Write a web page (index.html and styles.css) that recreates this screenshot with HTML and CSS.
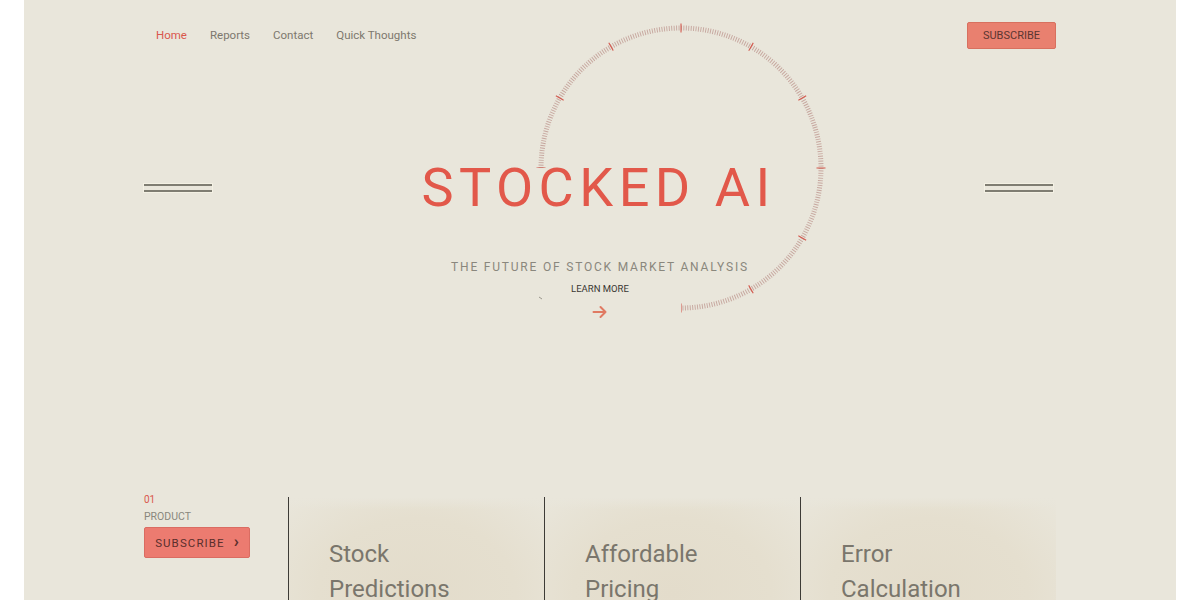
FILE: index.html
```html
<!DOCTYPE html>
<html lang="en">
<head>
<meta charset="utf-8">
<title>Stocked AI</title>
<link rel="stylesheet" href="styles.css">
</head>
<body>
<div class="page">
  <svg class="gauge" width="300" height="300" viewBox="0 0 300 300" aria-hidden="true">
    <path class="gauge-minor" d="M 10 150 A 140 140 0 1 1 150 290" pathLength="270"/>
    <path class="gauge-major" d="M 10 150 A 140 140 0 1 1 150 290" pathLength="270"/>
    <line class="gauge-dot" x1="8" y1="279" x2="11" y2="281"/>
  </svg>
  <div class="container">
    <header class="header">
      <nav class="nav">
        <a class="nav-link active" href="#">Home</a>
        <a class="nav-link" href="#">Reports</a>
        <a class="nav-link" href="#">Contact</a>
        <a class="nav-link" href="#">Quick Thoughts</a>
      </nav>
      <a class="btn-top" href="#">SUBSCRIBE</a>
    </header>

    <section class="hero">
      <div class="title-row">
        <span class="dbl-line"></span>
        <h1 class="title">STOCKED AI</h1>
        <span class="dbl-line"></span>
      </div>
      <p class="subtitle">THE FUTURE OF STOCK MARKET ANALYSIS</p>
      <a class="learn" href="#">LEARN MORE</a>
      <svg class="arrow" width="16" height="14" viewBox="0 0 16 14" aria-hidden="true">
        <path d="M1.5 7 H13.5 M8.5 2 L13.5 7 L8.5 12" fill="none" stroke="#e07a62" stroke-width="2" stroke-linecap="round" stroke-linejoin="round"/>
      </svg>
    </section>

    <section class="products">
      <div class="prod-intro">
        <div class="prod-num">01</div>
        <div class="prod-label">PRODUCT</div>
        <a class="btn-sub" href="#">SUBSCRIBE <span class="chev">&#8250;</span></a>
      </div>
      <div class="card"><h2 class="card-title">Stock<br>Predictions</h2></div>
      <div class="card"><h2 class="card-title">Affordable<br>Pricing</h2></div>
      <div class="card"><h2 class="card-title">Error<br>Calculation</h2></div>
    </section>
  </div>
</div>
</body>
</html>
```

FILE: styles.css
```css
* { box-sizing: border-box; }
html, body { margin: 0; padding: 0; background: #ffffff; }
body { font-family: Roboto, "Liberation Sans", sans-serif; }

.page {
  position: relative;
  margin: 0 24px;
  width: 1152px;
  height: 600px;
  overflow: hidden;
  background: #e9e6db;
}

.gauge {
  position: absolute;
  left: 507px;
  top: 18px;
  overflow: visible;
}
.gauge-minor {
  fill: none;
  stroke: #c6a69e;
  stroke-width: 5;
  stroke-dasharray: 0.38 0.62;
}
.gauge-major {
  fill: none;
  stroke: #d45a4f;
  stroke-width: 9;
  stroke-dasharray: 0.45 29.55;
  stroke-dashoffset: 0.22;
}
.gauge-dot { stroke: #9a968c; stroke-width: 1; }

.container {
  position: relative;
  width: 912px;
  margin: 0 auto;
}

.header {
  height: 70px;
  display: flex;
  align-items: center;
  justify-content: space-between;
}
.nav {
  display: flex;
  gap: 23px;
  padding-left: 12px;
}
.nav-link {
  font-size: 11.5px;
  color: #7d786e;
  text-decoration: none;
}
.nav-link.active { color: #d9574d; }

.btn-top {
  width: 89px;
  height: 27px;
  display: flex;
  align-items: center;
  justify-content: center;
  background: #e9806f;
  border: 1px solid #d8705f;
  border-radius: 2px;
  color: #5b3631;
  font-size: 11px;
  text-decoration: none;
}

.hero {
  display: flex;
  flex-direction: column;
  align-items: center;
  padding-top: 88px;
}
.title-row {
  align-self: stretch;
  display: flex;
  align-items: center;
  justify-content: space-between;
  height: 60px;
  padding-right: 3px;
}
.dbl-line {
  width: 68px;
  height: 8px;
  border-top: 2px solid #7f7d72;
  border-bottom: 2px solid #7f7d72;
  box-shadow: 0 0 0 1px #f4f1e4;
}
.title {
  margin: 0;
  font-size: 54px;
  line-height: 60px;
  font-weight: 400;
  color: #e2584a;
  letter-spacing: 5.5px;
}
.subtitle {
  margin: 41px 0 0 0;
  font-size: 12px;
  line-height: 16px;
  letter-spacing: 1.8px;
  color: #8a877d;
}
.learn {
  margin-top: 7px;
  font-size: 9.5px;
  line-height: 14px;
  color: #3a3733;
  text-decoration: none;
}
.arrow { margin-top: 9px; display: block; }

.products {
  margin-top: 174px;
  display: grid;
  grid-template-columns: 144px 256px 256px 256px;
}
.prod-intro {
  display: flex;
  flex-direction: column;
  align-items: flex-start;
}
.prod-num {
  font-size: 10px;
  line-height: 14px;
  color: #d9574d;
}
.prod-label {
  margin-top: 3px;
  font-size: 10.5px;
  line-height: 14px;
  color: #8a877d;
}
.btn-sub {
  margin-top: 3px;
  width: 106px;
  height: 31px;
  display: flex;
  align-items: center;
  justify-content: center;
  gap: 9px;
  background: #ec7b70;
  border: 1px solid #da6c62;
  border-radius: 2px;
  color: #5a2f2c;
  font-size: 11.5px;
  letter-spacing: 1.1px;
  text-decoration: none;
}
.chev { font-weight: 700; font-size: 17px; letter-spacing: 0; line-height: 1; margin-top: -3px; }

.card {
  margin-top: 4px;
  height: 120px;
  border-left: 1px solid #3d3b36;
  padding: 40px 0 0 40px;
  background:
    linear-gradient(to bottom, #e9e6db 0, rgba(233,230,219,0) 12px),
    radial-gradient(ellipse at 50% 80%, #e3dccb 0, #e5dfcf 55%, #e9e6db 100%);
}
.card-title {
  margin: 0;
  font-size: 24px;
  line-height: 35px;
  font-weight: 400;
  color: #7a766c;
}
```
